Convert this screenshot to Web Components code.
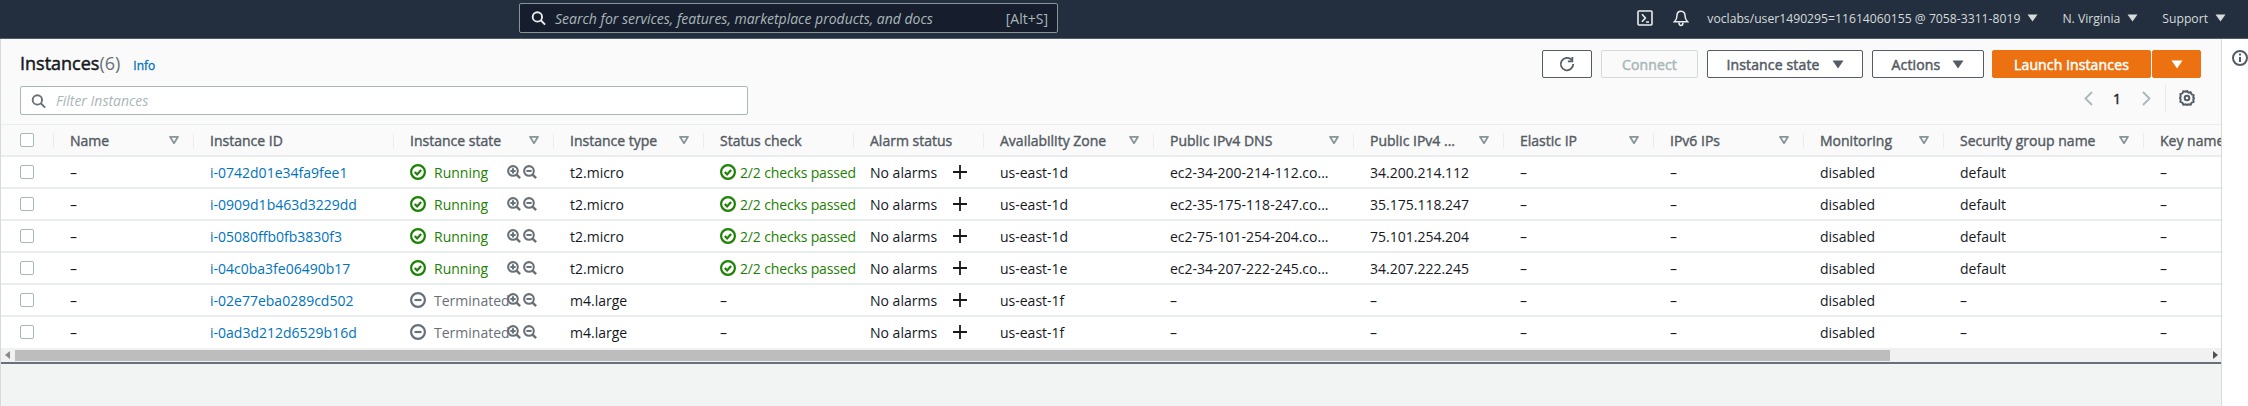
<!DOCTYPE html>
<html>
<head>
<meta charset="utf-8">
<title>Instances</title>
<style>
  html, body { margin: 0; height: 100%; background: #f2f3f3; overflow: hidden; }
  body { font-family: "Open Sans", "Noto Sans", sans-serif; font-size: 14px; color: #16191f; display: flex; flex-direction: column; height: 406px; }
</style>
</head>
<body>
<console-nav></console-nav>
<console-main>
  <instances-panel></instances-panel>
</console-main>

<script>
// small icon set shared by all the elements
const CARET = `<svg width="12" height="9" viewBox="0 0 12 9"><path d="M0.500 0.500h11L6 8.500z" fill="currentColor"/></svg>`;
const NAV_CARET = `<svg width="11" height="8" viewBox="0 0 11 8"><path d="M0.500 0.500h10L5.500 7.500z" fill="currentColor"/></svg>`;
const FILTER = `<svg width="10" height="8" viewBox="0 0 10 8"><path d="M1 .8h8L5 7.200z" fill="none" stroke="#879596" stroke-width="1.700" stroke-linejoin="round"/></svg>`;
const SEARCH = `<svg width="15" height="16" viewBox="0 0 16 16" fill="none" stroke="currentColor" stroke-width="2"><circle cx="6.800" cy="6.800" r="5"/><path d="M10.400 10.400L15 15"/></svg>`;
const CHECK_CIRCLE = `<svg width="16" height="16" viewBox="0 0 16 16" fill="none" stroke="currentColor" stroke-width="2.200"><circle cx="8" cy="8" r="6.900"/><path d="M4.800 8l2.300 2.400 4-4.400"/></svg>`;
const MINUS_CIRCLE = `<svg width="16" height="16" viewBox="0 0 16 16" fill="none" stroke="currentColor" stroke-width="2.200"><circle cx="8" cy="8" r="6.900"/><path d="M4.500 8h7"/></svg>`;
const ZOOM_IN = `<svg width="14" height="14" viewBox="0 0 15 15" fill="none" stroke="#687078" stroke-width="2.200"><circle cx="6.400" cy="6.400" r="5.200"/><path d="M10.200 10.200L14 14" stroke-width="2.600"/><path d="M3.600 6.400h5.600M6.400 3.600v5.600"/></svg>`;
const ZOOM_OUT = `<svg width="14" height="14" viewBox="0 0 15 15" fill="none" stroke="#687078" stroke-width="2.200"><circle cx="6.400" cy="6.400" r="5.200"/><path d="M10.200 10.200L14 14" stroke-width="2.600"/><path d="M3.600 6.400h5.600"/></svg>`;
const PLUS = `<svg width="14" height="14" viewBox="0 0 14 14" stroke="#16191f" stroke-width="1.800"><path d="M0 7h14M7 0v14"/></svg>`;

class ConsoleNav extends HTMLElement {
  constructor() {
    super();
    this.attachShadow({ mode: "open" });
    this.shadowRoot.innerHTML = `
      <style>
        :host { display: flex; align-items: center; flex: none; height: 39px; box-sizing: border-box; background: #232f3e; border-bottom: 1px solid #545b64; padding-bottom: 2px; color: #d5dbdb; font-size: 12.200px; }
        .search { margin-left: 519px; width: 539px; height: 30px; box-sizing: border-box; display: flex; align-items: center; background: #161e2d; border: 1px solid #879596; border-radius: 2px; padding: 0 9px 0 11px; }
        .search svg { color: #eaeded; margin-right: 9px; flex: none; }
        .search i { flex: 1; color: #aab7b8; font-size: 14px; white-space: nowrap; }
        .search span { color: #aab7b8; font-size: 14px; }
        .right { margin-left: auto; display: flex; align-items: center; padding-right: 22px; white-space: nowrap; }
        .term { color: #eaeded; display: flex; margin-right: 20px; }
        .bell { color: #eaeded; display: flex; margin-right: 18px; }
        .item { display: flex; align-items: center; gap: 7px; margin-left: 24px; }
        .item.first { margin-left: 0; }
      </style>
      <div class="search">${SEARCH}<i>Search for services, features, marketplace products, and docs</i><span>[Alt+S]</span></div>
      <div class="right">
        <span class="term"><svg width="16" height="16" viewBox="0 0 16 16" fill="none" stroke="currentColor" stroke-width="1.600"><rect x="1" y="1" width="14" height="14" rx="1"/><path d="M5 4.200L8.400 8 5 11.800M9 12h3"/></svg></span>
        <span class="bell"><svg width="16" height="17" viewBox="0 0 16 17" fill="none" stroke="currentColor" stroke-width="1.500"><path d="M8 1.200c-2.700 0-4 2-4 4.300 0 3-.8 4.600-2.600 6.200h13.200C12.800 10.100 12 8.500 12 5.500c0-2.300-1.300-4.300-4-4.300z"/><path d="M6 12.500c0 1.800.9 3 2 3s2-1.200 2-3"/></svg></span>
        <span class="item first">voclabs/user1490295=11614060155 @ 7058-3311-8019 ${NAV_CARET}</span>
        <span class="item">N. Virginia ${NAV_CARET}</span>
        <span class="item">Support ${NAV_CARET}</span>
      </div>
    `;
  }
}

class ConsoleMain extends HTMLElement {
  constructor() {
    super();
    this.attachShadow({ mode: "open" });
    this.shadowRoot.innerHTML = `
      <style>
        :host { display: flex; flex: 1; min-height: 0; }
        .content { width: 2222px; flex: none; box-sizing: border-box; border-left: 1px solid #d5dbdb; border-right: 1px solid #d5dbdb; min-width: 0; }
        .side { flex: 1; background: #fff; display: flex; align-items: flex-start; padding: 11px 0 0 10px; box-sizing: border-box; color: #545b64; }
      </style>
      <div class="content"><slot></slot></div>
      <div class="side"><svg width="16" height="16" viewBox="0 0 16 16" fill="none" stroke="currentColor" stroke-width="2"><circle cx="8" cy="8" r="7"/><path d="M8 7v5M8 3.500v2"/></svg></div>
    `;
  }
}

class AwsButton extends HTMLElement {
  constructor() {
    super();
    this.attachShadow({ mode: "open" });
    this.shadowRoot.innerHTML = `
      <style>
        :host { display: inline-flex; align-items: center; justify-content: center; gap: 12px; box-sizing: border-box; height: 28px; border: 1px solid #545b64; border-radius: 2px; background: #fff; color: #545b64; font-size: 14px; letter-spacing: .15px; -webkit-text-stroke: .5px currentColor; white-space: nowrap; }
        :host([disabled]) { border-color: #d5dbdb; color: #aab7b8; background: #fafafa; }
        :host([primary]) { background: #ec7211; border-color: #ec7211; color: #fff; }
      </style>
      <slot></slot>
    `;
  }
}

class InstanceRow extends HTMLElement {
  constructor() {
    super();
    this.attachShadow({ mode: "open" });
  }
  // cells is an array of html strings, one per column after the checkbox
  set cells(list) {
    this.shadowRoot.innerHTML = `
      <style>
        :host { display: grid; grid-template-columns: var(--cols); height: 32px; box-sizing: border-box; border-top: 2px solid #eaeded; background: #fff; color: #16191f; }
        :host([head]) { height: 31px; background: #fafafa; color: #545b64; -webkit-text-stroke: .4px currentColor; border-top: 1px solid #eaeded; }
        :host([last]) { height: 33px; padding-bottom: 1px; }
        .cell { display: flex; align-items: center; min-width: 0; padding: 0 0 0 16px; box-sizing: border-box; white-space: nowrap; }
        :host([head]) .cell { position: relative; justify-content: space-between; padding-right: 15px; }
        :host([head]) .cell::before { content: ""; position: absolute; left: -1px; top: 8px; bottom: 7px; width: 1px; background: #eaeded; }
        :host([head]) .check::before { display: none; }
        .box { width: 14px; height: 14px; box-sizing: border-box; border: 1px solid #aab7b8; border-radius: 2px; background: #fff; }
        .cell.check { padding-left: 19px; }
        a { color: #0073bb; text-decoration: none; }
        .ok { color: #1d8102; }
        .off { color: #687078; }
        .state { display: flex; align-items: center; width: 100%; }
        .state .label { width: 97px; display: flex; align-items: center; gap: 8px; flex: none; }
        .state .label svg, .status svg { flex: none; }
        .state .zoom { display: flex; gap: 2px; }
        .status { display: flex; align-items: center; gap: 4px; flex: none; letter-spacing: -.15px; }
        .alarm { display: flex; align-items: center; }
        .alarm span { width: 83px; }
      </style>
      <div class="cell check"><span class="box"></span></div>
      ${list.map(c => `<div class="cell">${c}</div>`).join("")}
    `;
  }
}

class InstanceTable extends HTMLElement {
  constructor() {
    super();
    this.attachShadow({ mode: "open" });
    this.shadowRoot.innerHTML = `
      <style>
        :host { display: block; overflow: hidden; --cols: 53px 140px 200px 160px 150px 150px 130px 170px 200px 150px 150px 150px 140px 200px 200px; }
        .rows { width: 2243px; }
        .bar { display: flex; align-items: flex-start; height: 16px; box-sizing: border-box; background: #f1f1f1; border-bottom: 2px solid #687078; }
        .arrow { flex: none; display: flex; padding-top: 3px; }
        .left { width: 14px; padding-left: 4px; box-sizing: border-box; }
        .thumb { width: 1875px; height: 11px; margin-top: 2px; background: #bdbdbd; flex: none; }
        .end { margin-left: auto; padding-right: 3px; }
      </style>
      <div class="rows"></div>
      <div class="bar">
        <span class="arrow left"><svg width="5" height="8" viewBox="0 0 5 8"><path d="M5 0v8L0 4z" fill="#8a8a8a"/></svg></span>
        <span class="thumb"></span>
        <span class="arrow end"><svg width="5" height="8" viewBox="0 0 5 8"><path d="M0 0v8l5-4z" fill="#505050"/></svg></span>
      </div>
    `;
    const rows = this.shadowRoot.querySelector(".rows");

    const heads = ["Name", "Instance ID", "Instance state", "Instance type", "Status check", "Alarm status", "Availability Zone", "Public IPv4 DNS", "Public IPv4 ...", "Elastic IP", "IPv6 IPs", "Monitoring", "Security group name", "Key name"];
    const noFilter = ["Instance ID", "Status check", "Alarm status", "Key name"];
    const head = document.createElement("instance-row");
    head.setAttribute("head", "");
    head.cells = heads.map(h => `<span>${h}</span>${noFilter.includes(h) ? "" : FILTER}`);
    rows.append(head);

    const data = [
      ["i-0742d01e34fa9fee1", 1, "t2.micro", "us-east-1d", "ec2-34-200-214-112.co...", "34.200.214.112"],
      ["i-0909d1b463d3229dd", 1, "t2.micro", "us-east-1d", "ec2-35-175-118-247.co...", "35.175.118.247"],
      ["i-05080ffb0fb3830f3", 1, "t2.micro", "us-east-1d", "ec2-75-101-254-204.co...", "75.101.254.204"],
      ["i-04c0ba3fe06490b17", 1, "t2.micro", "us-east-1e", "ec2-34-207-222-245.co...", "34.207.222.245"],
      ["i-02e77eba0289cd502", 0, "m4.large", "us-east-1f", "–", "–"],
      ["i-0ad3d212d6529b16d", 0, "m4.large", "us-east-1f", "–", "–"],
    ];
    data.forEach((d, i) => {
      const [id, running, type, zone, dns, ip] = d;
      const row = document.createElement("instance-row");
      if (i === data.length - 1) row.setAttribute("last", "");
      const state = running
        ? `<span class="label ok">${CHECK_CIRCLE}Running</span>`
        : `<span class="label off">${MINUS_CIRCLE}Terminated</span>`;
      row.cells = [
        "–",
        `<a>${id}</a>`,
        `<div class="state">${state}<span class="zoom">${ZOOM_IN}${ZOOM_OUT}</span></div>`,
        type,
        running ? `<span class="status ok">${CHECK_CIRCLE}2/2 checks passed</span>` : "–",
        `<div class="alarm"><span>No alarms</span>${PLUS}</div>`,
        zone, dns, ip, "–", "–", "disabled",
        running ? "default" : "–",
        "–",
      ];
      rows.append(row);
    });
  }
}

class InstancesPanel extends HTMLElement {
  constructor() {
    super();
    this.attachShadow({ mode: "open" });
    this.shadowRoot.innerHTML = `
      <style>
        :host { display: block; background: #fafafa; }
        .top { display: grid; grid-template-columns: 1fr auto; height: 85px; box-sizing: border-box; padding: 11px 20px 0 19px; align-items: start; }
        h2 { margin: 0; font-size: 18px; line-height: 28px; font-weight: 400; color: #16191f; display: flex; align-items: baseline; }
        h2 b { font-weight: 400; -webkit-text-stroke: .5px currentColor; }
        h2 .count { color: #687078; }
        h2 a { font-size: 12px; color: #0073bb; margin-left: 13px; -webkit-text-stroke: .3px currentColor; }
        .actions { display: flex; gap: 9px; }
        .filter { margin-top: 6px; width: 728px; height: 29px; box-sizing: border-box; display: flex; align-items: center; gap: 10px; background: #fff; border: 1px solid #aab7b8; border-radius: 2px; padding: 0 10px; color: #687078; }
        .filter i { color: #aab7b8; font-size: 14px; }
        .head { margin-top: -1px; }
        .pages { display: flex; align-items: center; justify-content: flex-end; height: 28px; margin-top: 6px; padding-right: 6px; color: #16191f; font-size: 14px; }
        .pages b { font-weight: 400; -webkit-text-stroke: .4px currentColor; margin: 0 21px 0 20px; }
        .pages .sep { width: 1px; align-self: stretch; background: #eaeded; margin: 0 13px 0 14px; }
      </style>
      <div class="top">
        <div class="head">
          <h2><b>Instances</b><span class="count">(6)</span><a>Info</a></h2>
          <div class="filter">${SEARCH}<i>Filter Instances</i></div>
        </div>
        <div>
          <div class="actions">
            <aws-button style="width:50px"><svg width="16" height="16" viewBox="0 0 18 18" fill="none" stroke="#545b64" stroke-width="2"><path d="M14.300 4.500A7 7 0 1 0 16 9"/><path d="M15 1v5h-5"/></svg></aws-button>
            <aws-button disabled style="width:97px">Connect</aws-button>
            <aws-button style="width:156px">Instance state ${CARET}</aws-button>
            <aws-button style="width:112px">Actions ${CARET}</aws-button>
            <span style="display:flex;gap:1px;margin-left:-1px">
              <aws-button primary style="width:159px">Launch instances</aws-button>
              <aws-button primary style="width:49px">${CARET}</aws-button>
            </span>
          </div>
          <div class="pages">
            <svg width="9" height="15" viewBox="0 0 9 15" fill="none" stroke="#aab7b8" stroke-width="1.800"><path d="M8 1L1.500 7.500 8 14"/></svg>
            <b>1</b>
            <svg width="9" height="15" viewBox="0 0 9 15" fill="none" stroke="#aab7b8" stroke-width="1.800"><path d="M1 1l6.500 6.500L1 14"/></svg>
            <span class="sep"></span>
            <svg width="16" height="16" viewBox="0 0 16 16" fill="none" stroke="#545b64" stroke-width="2"><circle cx="8" cy="8" r="2.300"/><path d="M8 1l1.500 1.600 2.200-.3.900 2 2 .900-.3 2.200L15 8l-.7 1.600.3 2.200-2 .9-.9 2-2.200-.3L8 15l-1.500-.6-2.200.3-.9-2-2-.9.300-2.200L1 8l.7-1.600-.3-2.200 2-.9.9-2 2.200.3z"/></svg>
          </div>
        </div>
      </div>
      <instance-table></instance-table>
    `;
  }
}

customElements.define("console-nav", ConsoleNav);
customElements.define("console-main", ConsoleMain);
customElements.define("aws-button", AwsButton);
customElements.define("instance-row", InstanceRow);
customElements.define("instance-table", InstanceTable);
customElements.define("instances-panel", InstancesPanel);
</script>
</body>
</html>
